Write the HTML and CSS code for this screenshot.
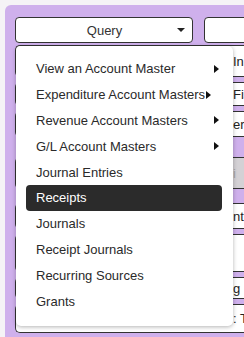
FILE: index.html
```html
<!DOCTYPE html>
<html lang="en">

<head>
    <meta charset="UTF-8">
    <meta name="viewport" content="width=device-width, initial-scale=1.0">
    <title>Query Menu</title>
    <link rel="stylesheet" href="styles.css">
</head>

<body>
    <div class="panel">
        <!-- Toolbar -->
        <div class="toolbar">
            <button class="select">
                <span></span>
                <span class="select-label">Query</span>
                <span class="caret"></span>
            </button>
            <button class="select select-next"></button>
        </div>

        <!-- Table behind the menu -->
        <div class="rows">
            <div class="row row-1"><span class="cell-main"></span><span class="cell-side">In</span></div>
            <div class="row row-2"><span class="cell-main"></span><span class="cell-side">Fis</span></div>
            <div class="row row-3"><span class="cell-main"></span><span class="cell-side">er</span></div>
            <div class="row row-4 row-muted"><span class="cell-main"></span><span class="cell-side">i</span></div>
            <div class="row row-5"><span class="cell-main"></span><span class="cell-side">ntr</span></div>
            <div class="row row-6"><span class="cell-main"></span><span class="cell-side"></span></div>
            <div class="row row-7"><span class="cell-main"></span><span class="cell-side">g</span></div>
            <div class="row row-8"><span class="cell-main"></span><span class="cell-side">: T</span></div>
        </div>

        <!-- Dropdown menu -->
        <ul class="menu">
            <li class="menu-item">View an Account Master <span class="arrow"></span></li>
            <li class="menu-item">Expenditure Account Masters<span class="arrow arrow-tight"></span></li>
            <li class="menu-item">Revenue Account Masters <span class="arrow"></span></li>
            <li class="menu-item">G/L Account Masters <span class="arrow"></span></li>
            <li class="menu-item">Journal Entries</li>
            <li class="menu-item active">Receipts</li>
            <li class="menu-item">Journals</li>
            <li class="menu-item">Receipt Journals</li>
            <li class="menu-item">Recurring Sources</li>
            <li class="menu-item">Grants</li>
        </ul>
    </div>
</body>

</html>
```

FILE: styles.css
```css
html,
body {
    margin: 0;
    padding: 0;
    height: 100%;
    overflow: hidden;
}

body {
    font-family: "Liberation Sans", Arial, sans-serif;
    font-size: 13px;
    background: #f5f3f6;
    color: #333;
}

.panel {
    position: relative;
    margin: 5px 0 0 5px;
    height: calc(100% - 5px);
    padding: 12px 0 0 10px;
    box-sizing: border-box;
    background: #cfb0ec;
    border-top-left-radius: 6px;
    overflow: hidden;
}

.toolbar {
    display: flex;
    gap: 11px;
    height: 26px;
}

.select {
    flex: 0 0 178px;
    height: 26px;
    padding: 0 7px 0 8px;
    border: 1px solid #333;
    border-radius: 4px;
    background: white;
    font: inherit;
    color: #333;
    display: grid;
    grid-template-columns: 1fr auto 1fr;
    align-items: center;
}

.select-label {
    padding-top: 1px;
}

.caret {
    justify-self: end;
    width: 0;
    height: 0;
    border-left: 4px solid transparent;
    border-right: 4px solid transparent;
    border-top: 4px solid #222;
}

.select-next {
    flex: 0 0 80px;
}

.rows {
    margin-top: 2px;
    display: flex;
    flex-direction: column;
    gap: 5px;
}

.row {
    display: flex;
    align-items: center;
    background: white;
    border: 1px solid #333;
    border-right: none;
    border-radius: 5px 0 0 5px;
    color: #222;
}

.cell-main {
    flex: 0 0 217px;
}

.cell-side {
    white-space: nowrap;
}

.row-1 { height: 30px; }
.row-2 { height: 22px; }
.row-3 { height: 24px; }
.row-4 { height: 30px; margin-top: 15px; }
.row-5 { height: 24px; margin-top: 9px; }
.row-6 { height: 36px; }
.row-7 { height: 20px; }
.row-8 { height: 27px; }

.row-muted {
    background: #d4d1d5;
    color: #a9a6aa;
}

.menu {
    position: absolute;
    top: 41px;
    left: 11px;
    width: 217px;
    height: 280px;
    margin: 0;
    padding: 10px 11px 12px 10px;
    box-sizing: border-box;
    list-style: none;
    background: white;
    border-radius: 5px;
    box-shadow: 0 1px 4px rgba(0, 0, 0, 0.3);
}

.menu-item {
    display: flex;
    align-items: center;
    height: 25.8px;
    padding: 0 3px 0 10px;
    border-radius: 4px;
    color: #2a2a2a;
    white-space: nowrap;
}

.menu-item.active {
    background-color: #2b2b2b;
    color: white;
}

.arrow {
    margin-left: auto;
    width: 0;
    height: 0;
    border-top: 4px solid transparent;
    border-bottom: 4px solid transparent;
    border-left: 5px solid #111;
}

.arrow-tight {
    margin-left: 1px;
}
```
